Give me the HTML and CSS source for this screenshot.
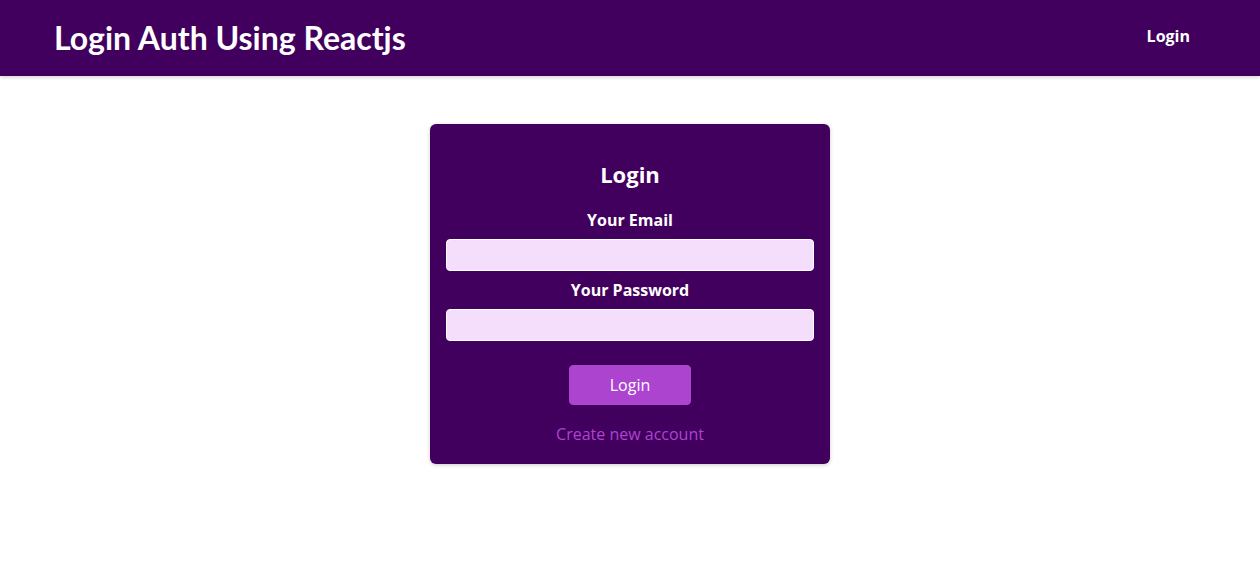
FILE: index.html
```html
<!DOCTYPE html>
<html lang="en">
<head>
<meta charset="utf-8">
<title>Login Auth Using Reactjs</title>
<link rel="stylesheet" href="styles.css">
</head>
<body>
<header class="header">
  <div class="logo">Login Auth Using Reactjs</div>
  <nav class="nav"><a href="#" class="nav-link">Login</a></nav>
</header>
<main>
  <section class="auth">
    <h1 class="auth-title">Login</h1>
    <form class="auth-form">
      <div class="control">
        <label for="email">Your Email</label>
        <input type="email" id="email">
      </div>
      <div class="control">
        <label for="password">Your Password</label>
        <input type="password" id="password">
      </div>
      <div class="actions">
        <button type="button" class="btn">Login</button>
        <button type="button" class="toggle">Create new account</button>
      </div>
    </form>
  </section>
</main>
</body>
</html>
```
FILE: styles.css
```css
* { box-sizing: border-box; }
html, body { margin: 0; padding: 0; }
body {
  font-family: "Open Sans", "Liberation Sans", sans-serif;
  background: #fff;
}
.header {
  height: 76px;
  background-color: #41005d;
  display: flex;
  justify-content: space-between;
  align-items: center;
  padding: 0 70px 0 54px;
  box-shadow: 0 1px 4px rgba(0, 0, 0, 0.2);
}
.logo {
  font-family: Lato, "Liberation Sans", sans-serif;
  font-size: 32px;
  font-weight: bold;
  color: #fff;
  margin-top: -2px;
}
.nav-link {
  display: block;
  color: #fff;
  text-decoration: none;
  font-weight: bold;
  font-size: 16px;
  margin-top: -4px;
}
.auth {
  margin: 48px auto;
  width: 400px;
  border-radius: 6px;
  background-color: #41005d;
  box-shadow: 0 1px 4px rgba(0, 0, 0, 0.2);
  padding: 16px 16px 17px;
  text-align: center;
}
.auth-title {
  color: #fff;
  font-size: 22px;
  line-height: 32px;
  margin: 18px 0 19px;
}
.control { margin-bottom: 8px; }
.control label {
  display: block;
  color: #fff;
  font-weight: bold;
  font-size: 16px;
  line-height: 22px;
  margin-bottom: 8px;
}
.control input {
  display: block;
  font: inherit;
  font-size: 16px;
  line-height: 22px;
  height: 32px;
  background-color: #f5defc;
  color: #41005d;
  border-radius: 4px;
  border: 1px solid #fff;
  width: 100%;
  padding: 4px;
  outline: none;
}
.actions {
  margin-top: 24px;
  display: flex;
  flex-direction: column;
  align-items: center;
}
.btn {
  font: inherit;
  font-size: 16px;
  line-height: 22px;
  color: #fff;
  background-color: #ad44d0;
  border: 1px solid #ad44d0;
  border-radius: 4px;
  padding: 8px 40px;
  cursor: pointer;
}
.toggle {
  font: inherit;
  font-size: 16px;
  line-height: 22px;
  margin-top: 16px;
  background: transparent;
  color: #ad44d0;
  border: none;
  padding: 2px 24px;
  cursor: pointer;
}
```
